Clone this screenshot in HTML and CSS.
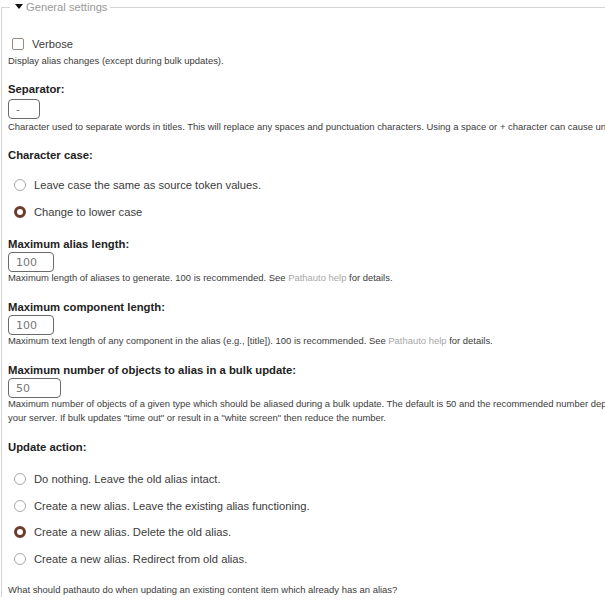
FILE: index.html
```html
<!DOCTYPE html>
<html>
<head>
<meta charset="utf-8">
<link rel="stylesheet" href="styles.css">
</head>
<body>
<fieldset class="group">
  <legend class="legend"><span class="arrow"></span>General settings</legend>

  <div class="item item-check">
    <label class="check-row"><input type="checkbox" class="cb"> <span class="opt">Verbose</span></label>
    <div class="desc">Display alias changes (except during bulk updates).</div>
  </div>

  <div class="item">
    <div class="lbl">Separator:</div>
    <input class="txt w-sep" type="text" value="-">
    <div class="desc desc-sep">Character used to separate words in titles. This will replace any spaces and punctuation characters. Using a space or + character can cause unexpected results.</div>
  </div>

  <div class="item">
    <div class="lbl">Character case:</div>
    <div class="radios">
      <label class="radio-row"><input type="radio" name="case" class="rb"><span class="opt">Leave case the same as source token values.</span></label>
      <label class="radio-row"><input type="radio" name="case" class="rb" checked><span class="opt">Change to lower case</span></label>
    </div>
  </div>

  <div class="item">
    <div class="lbl lbl-after-radios">Maximum alias length:</div>
    <input class="txt txt-num w-100" type="text" value="100">
    <div class="desc desc-num">Maximum length of aliases to generate. 100 is recommended. See <a class="lnk">Pathauto help</a> for details.</div>
  </div>

  <div class="item">
    <div class="lbl lbl-num">Maximum component length:</div>
    <input class="txt txt-num w-100" type="text" value="100">
    <div class="desc desc-num">Maximum text length of any component in the alias (e.g., [title]). 100 is recommended. See <a class="lnk">Pathauto help</a> for details.</div>
  </div>

  <div class="item">
    <div class="lbl lbl-num">Maximum number of objects to alias in a bulk update:</div>
    <input class="txt txt-num w-50" type="text" value="50">
    <div class="desc desc-num">Maximum number of objects of a given type which should be aliased during a bulk update. The default is 50 and the recommended number depends on the speed of<br>your server. If bulk updates "time out" or result in a "white screen" then reduce the number.</div>
  </div>

  <div class="item">
    <div class="lbl lbl-num">Update action:</div>
    <div class="radios radios-update">
      <label class="radio-row"><input type="radio" name="upd" class="rb"><span class="opt">Do nothing. Leave the old alias intact.</span></label>
      <label class="radio-row"><input type="radio" name="upd" class="rb"><span class="opt">Create a new alias. Leave the existing alias functioning.</span></label>
      <label class="radio-row"><input type="radio" name="upd" class="rb" checked><span class="opt">Create a new alias. Delete the old alias.</span></label>
      <label class="radio-row"><input type="radio" name="upd" class="rb"><span class="opt">Create a new alias. Redirect from old alias.</span></label>
    </div>
    <div class="desc desc-last">What should pathauto do when updating an existing content item which already has an alias?</div>
  </div>
</fieldset>
</body>
</html>
```

FILE: styles.css
```css
html, body {
  margin: 0;
  padding: 0;
  background: #fff;
  overflow: hidden;
}
body {
  width: 605px;
  height: 600px;
  font-family: "Liberation Sans", Arial, sans-serif;
  color: #3b3b3b;
}
.group {
  margin: 0 0 0 1px;
  padding: 0 7px 0 6px;
  border: 1px solid #d4d4d4;
  border-right: none;
  border-bottom: none;
  width: 760px;
}
.legend {
  margin-left: 2px;
  padding: 0 3px 0 5px;
  font-size: 11.2px;
  color: #9a9a9a;
  line-height: 14px;
  white-space: nowrap;
}
.arrow {
  display: inline-block;
  width: 0;
  height: 0;
  border-left: 4px solid transparent;
  border-right: 4px solid transparent;
  border-top: 5px solid #111;
  margin-right: 3px;
  vertical-align: 2px;
}
.item {
  margin: 0;
}
.item-check {
  padding-top: 22px;
}
.check-row {
  display: flex;
  align-items: center;
  height: 16px;
  padding-left: 4px;
}
.cb {
  appearance: none;
  -webkit-appearance: none;
  width: 12px;
  height: 12px;
  margin: 0 8px 0 0;
  border: 1px solid #9c8b82;
  border-radius: 2px;
  background: #fff;
  box-sizing: border-box;
}
.opt {
  font-size: 11.2px;
  color: #3b3b3b;
  white-space: nowrap;
}
.desc {
  font-size: 9.45px;
  line-height: 14px;
  color: #3b3b3b;
  margin-top: 2px;
  white-space: nowrap;
}
.desc-sep {
  margin-top: 1px;
}
.desc-num {
  margin-top: -1px;
}
.desc-last {
  margin-top: 16px;
}
.lbl {
  font-size: 11.3px;
  font-weight: bold;
  color: #222;
  margin-top: 14px;
  line-height: 14px;
  white-space: nowrap;
}
.lbl-after-radios {
  margin-top: 17px;
}
.lbl-num {
  margin-top: 15px;
}
.txt {
  display: block;
  margin: 3px 0 0 0;
  height: 20px;
  box-sizing: border-box;
  border: 1px solid #6a6a6a;
  border-radius: 4px;
  padding: 0 0 0 7px;
  font-family: "DejaVu Sans", sans-serif;
  font-size: 11px;
  color: #777;
  background: #fff;
}
.txt-num {
  margin-top: 1px;
}
.w-sep { width: 32px; }
.w-100 { width: 46px; }
.w-50 { width: 53px; }
.lnk {
  color: #a8a8a8;
  text-decoration: none;
}
.radios {
  display: flex;
  flex-direction: column;
  gap: 11px;
  padding-top: 15px;
}
.radios-update {
  padding-top: 17px;
  gap: 10.6px;
}
.radio-row {
  display: flex;
  align-items: center;
  height: 16px;
  padding-left: 6px;
}
.rb {
  appearance: none;
  -webkit-appearance: none;
  width: 12px;
  height: 12px;
  margin: 0 8px 0 0;
  border-radius: 50%;
  border: 1px solid #aaa;
  background: #fff;
  box-sizing: border-box;
}
.rb:checked {
  border: 3.5px solid #6b3b2b;
  background: #fff;
}
```
